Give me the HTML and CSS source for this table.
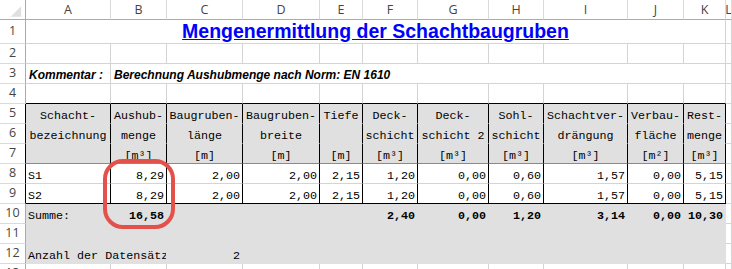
FILE: index.html
```html
<!DOCTYPE html>
<html lang="de">
<head>
<meta charset="utf-8">
<title>Mengenermittlung der Schachtbaugruben</title>
<link rel="stylesheet" href="styles.css">
</head>
<body>
<div class="page">
  <div class="sheet">
    <!-- column header row -->
    <div class="corner"><svg class="tri" width="26" height="20" viewBox="0 0 26 20"><polygon points="11,17 22,17 22,6" fill="#dfdfdf"/></svg></div>
    <div class="ch">A</div><div class="ch">B</div><div class="ch">C</div><div class="ch">D</div><div class="ch">E</div><div class="ch">F</div><div class="ch">G</div><div class="ch">H</div><div class="ch">I</div><div class="ch">J</div><div class="ch">K</div><div class="ch">L</div>

    <!-- row 1 -->
    <div class="rh">1</div>
    <div class="title">Mengenermittlung der Schachtbaugruben</div>
    <div class="c"></div>

    <!-- row 2 -->
    <div class="rh">2</div>
    <div class="c"></div><div class="c"></div><div class="c"></div><div class="c"></div><div class="c"></div><div class="c"></div><div class="c"></div><div class="c"></div><div class="c"></div><div class="c"></div><div class="c"></div><div class="c"></div>

    <!-- row 3 -->
    <div class="rh">3</div>
    <div class="kom">Kommentar :</div>
    <div class="kom kom2">Berechnung Aushubmenge nach Norm: EN 1610</div>
    <div class="c"></div>

    <!-- row 4 -->
    <div class="rh">4</div>
    <div class="c r4"></div><div class="c r4"></div><div class="c r4"></div><div class="c r4"></div><div class="c r4"></div><div class="c r4"></div><div class="c r4"></div><div class="c r4"></div><div class="c r4"></div><div class="c r4"></div><div class="c r4"></div><div class="c"></div>

    <!-- row 5 -->
    <div class="rh tb">5</div>
    <div class="hd">Schacht-</div><div class="hd">Aushub-</div><div class="hd">Baugruben-</div><div class="hd">Baugruben-</div><div class="hd">Tiefe</div><div class="hd">Deck-</div><div class="hd">Deck-</div><div class="hd">Sohl-</div><div class="hd">Schachtver-</div><div class="hd">Verbau-</div><div class="hd">Rest-</div>
    <div class="c"></div>

    <!-- row 6 -->
    <div class="rh tb">6</div>
    <div class="hd">bezeichnung</div><div class="hd">menge</div><div class="hd">länge</div><div class="hd">breite</div><div class="hd"></div><div class="hd">schicht</div><div class="hd">schicht 2</div><div class="hd">schicht</div><div class="hd">drängung</div><div class="hd">fläche</div><div class="hd">menge</div>
    <div class="c"></div>

    <!-- row 7 -->
    <div class="rh tb">7</div>
    <div class="hd h7"></div><div class="hd h7">[m³]</div><div class="hd h7">[m]</div><div class="hd h7">[m]</div><div class="hd h7">[m]</div><div class="hd h7">[m³]</div><div class="hd h7">[m³]</div><div class="hd h7">[m³]</div><div class="hd h7">[m³]</div><div class="hd h7">[m²]</div><div class="hd h7">[m³]</div>
    <div class="c"></div>

    <!-- row 8 -->
    <div class="rh tb">8</div>
    <div class="dt t">S1</div><div class="dt">8,29</div><div class="dt">2,00</div><div class="dt">2,00</div><div class="dt">2,15</div><div class="dt">1,20</div><div class="dt">0,00</div><div class="dt">0,60</div><div class="dt">1,57</div><div class="dt">0,00</div><div class="dt">5,15</div>
    <div class="c"></div>

    <!-- row 9 -->
    <div class="rh tb">9</div>
    <div class="dt t r9">S2</div><div class="dt r9">8,29</div><div class="dt r9">2,00</div><div class="dt r9">2,00</div><div class="dt r9">2,15</div><div class="dt r9">1,20</div><div class="dt r9">0,00</div><div class="dt r9">0,60</div><div class="dt r9">1,57</div><div class="dt r9">0,00</div><div class="dt r9">5,15</div>
    <div class="c"></div>

    <!-- row 10 -->
    <div class="rh">10</div>
    <div class="sm t">Summe:</div><div class="sm b">16,58</div><div class="sm"></div><div class="sm"></div><div class="sm"></div><div class="sm b">2,40</div><div class="sm b">0,00</div><div class="sm b">1,20</div><div class="sm b">3,14</div><div class="sm b">0,00</div><div class="sm b">10,30</div>
    <div class="c"></div>

    <!-- row 11 -->
    <div class="rh">11</div>
    <div class="sm"></div><div class="sm"></div><div class="sm"></div><div class="sm"></div><div class="sm"></div><div class="sm"></div><div class="sm"></div><div class="sm"></div><div class="sm"></div><div class="sm"></div><div class="sm"></div>
    <div class="c"></div>

    <!-- row 12 -->
    <div class="rh">12</div>
    <div class="sm t anz">Anzahl der Datensätze:</div><div class="sm">2</div><div class="sm"></div><div class="sm"></div><div class="sm"></div><div class="sm"></div><div class="sm"></div><div class="sm"></div><div class="sm"></div><div class="sm"></div>
    <div class="c"></div>

    <!-- row 13 -->
    <div class="rh">13</div>
    <div class="c"></div><div class="c"></div><div class="c"></div><div class="c"></div><div class="c"></div><div class="c"></div><div class="c"></div><div class="c"></div><div class="c"></div><div class="c"></div><div class="c"></div><div class="c"></div>
  </div>
  <div class="mark"></div>
</div>
</body>
</html>
```

FILE: styles.css
```css
html, body {
  margin: 0;
  padding: 0;
  background: #ffffff;
}

.page {
  position: relative;
  width: 732px;
  height: 269px;
  overflow: hidden;
}

.sheet {
  display: grid;
  grid-template-columns: 26px 85px 56px 76px 77px 43px 55px 71px 55px 84px 56px 42px 1fr;
  grid-template-rows: 20px 24px repeat(12, 20px);
  width: 732px;
  font-family: "Liberation Mono", "Courier New", monospace;
  font-size: 11.7px;
  color: #000;
}

.sheet > div {
  box-sizing: border-box;
  border-right: 1px solid #d4d4d4;
  border-bottom: 1px solid #d4d4d4;
  overflow: hidden;
  white-space: nowrap;
  display: flex;
  align-items: flex-end;
  line-height: 14px;
  min-width: 0;
}

.sheet > .corner {
  border-right-color: #ababab;
  border-bottom-color: #ababab;
  align-items: stretch;
}

.tri {
  display: block;
}

.sheet > .ch {
  font-family: "Open Sans", "Noto Sans", sans-serif;
  font-size: 12.5px;
  color: #444;
  justify-content: center;
  align-items: center;
  line-height: 1;
  border-bottom-color: #ababab;
  border-right-color: #dadada;
  padding-top: 1px;
}

.sheet > .rh {
  font-family: "Open Sans", "Noto Sans", sans-serif;
  font-size: 12.5px;
  color: #444;
  justify-content: center;
  align-items: center;
  line-height: 1;
  border-right-color: #ababab;
  border-bottom-color: #dadada;
}

.sheet > .rh.tb {
  border-right-color: #000;
}

.sheet > .title {
  grid-column: span 11;
  justify-content: center;
  font-family: "Liberation Sans", Arial, sans-serif;
  font-weight: bold;
  font-size: 19.5px;
  line-height: 23px;
  color: #0000ff;
  text-decoration: underline;
}

.sheet > .kom {
  font-family: "Liberation Sans", Arial, sans-serif;
  font-weight: bold;
  font-style: italic;
  font-size: 12px;
  line-height: 15px;
  padding-left: 3px;
}

.sheet > .kom2 {
  grid-column: span 10;
}

.sheet > .r4 {
  border-bottom-color: #000;
}

.sheet > .hd {
  background: #e0e0e0;
  border-right-color: #000;
  border-bottom-color: #e0e0e0;
  justify-content: center;
}

.sheet > .hd.h7 {
  border-bottom-color: #8a8a8a;
}

.sheet > .dt {
  border-right-color: #000;
  justify-content: flex-end;
  padding-right: 2px;
}

.sheet > .dt.t {
  justify-content: flex-start;
  padding-left: 2px;
  padding-right: 0;
}

.sheet > .r9 {
  border-bottom-color: #000;
}

.sheet > .sm {
  background: #e0e0e0;
  border-right-color: #e0e0e0;
  border-bottom-color: #e0e0e0;
  justify-content: flex-end;
  padding-right: 2px;
}

.sheet > .sm.b {
  font-weight: bold;
}

.sheet > .sm.t {
  justify-content: flex-start;
  padding-left: 2px;
  padding-right: 0;
}

.sheet > .anz {
  grid-column: span 2;
}

.mark {
  position: absolute;
  left: 103px;
  top: 159px;
  width: 72px;
  height: 70px;
  box-sizing: border-box;
  border: 4px solid #e4514b;
  border-radius: 20px;
}
```
